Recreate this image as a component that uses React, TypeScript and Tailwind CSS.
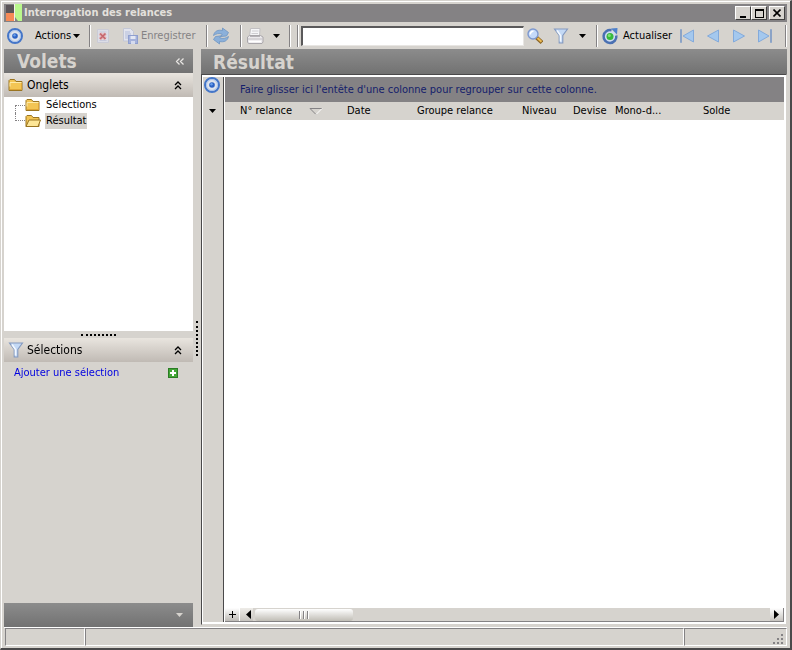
import React, { useState } from 'react';

const TargetIcon = () => (
  <svg className="h-4 w-4" viewBox="0 0 16 16" fill="none">
    <circle cx="8" cy="8" r="7" fill="#dfe4ec" stroke="#4576c8" strokeWidth="2" />
    <circle cx="8" cy="8" r="5.5" stroke="#a9c2ea" strokeWidth="1" />
    <circle cx="8" cy="8" r="2.800" fill="#2c62c4" />
    <circle cx="7.500" cy="7.300" r="1.200" fill="#6ba0ea" />
  </svg>
);

const LogoIcon = () => (
  <svg className="h-[18px] w-4 shrink-0" viewBox="0 0 16 18">
    <rect x="0" y="1" width="8" height="8" fill="#5b5558" />
    <rect x="0" y="9" width="9" height="8" fill="#f58a56" />
    <path d="M9 0h7v17h-4L9 13z" fill="#b9f78c" />
    <rect x="8" y="0" width="1" height="17" fill="#f4efe8" />
  </svg>
);

const DeleteIcon = () => (
  <svg className="h-4 w-4" viewBox="0 0 16 16">
    <path d="M2.500 1.500h11v13h-11z" fill="#dcdde6" stroke="#cacbd6" />
    <path d="M4.500 4h7M4.500 12.500h7" stroke="#c5c9dc" />
    <path d="M5 5.500l5.500 5.500M10.500 5.500L5 11" stroke="#e4b5b8" strokeWidth="3.600" />
    <path d="M5 5.500l5.500 5.500M10.500 5.500L5 11" stroke="#c4666d" strokeWidth="1.600" />
  </svg>
);

const SaveIcon = () => (
  <svg className="h-4 w-4" viewBox="0 0 16 16">
    <path d="M1.500.5h7l3 3V13h-10z" fill="#e2e4ee" stroke="#c3c7d6" />
    <path d="M3 4h5M3 6h6M3 8h5M3 10h3" stroke="#b3bddb" />
    <rect x="6.500" y="7.500" width="9" height="8" fill="#a5b2db" stroke="#8f9fcf" />
    <path d="M8.500 8h5v3h-5z" fill="#e4e8f4" />
    <path d="M9 13h4v3H9z" fill="#d5dbee" />
  </svg>
);

const SyncIcon = () => (
  <svg className="h-[18px] w-[18px]" viewBox="0 0 18 18" fill="#8bb0da" stroke="#6d94c2" strokeWidth=".8">
    <path d="M1.500 8.500C2.500 4 6 2.500 10.500 3.500V1L16.500 5.500 14.500 9 9 9.500 10.200 7.200C7 6 4.500 6.500 1.500 8.500z" />
    <path d="M16.500 9.500C15.500 14 12 15.500 7.500 14.500V17L1.500 12.500 3.500 9.500 9 8.800 7.800 10.800C11 12 13.500 11.500 16.500 9.500z" />
  </svg>
);

const PrinterIcon = () => (
  <svg className="h-[18px] w-[18px]" viewBox="0 0 18 18">
    <path d="M4.500 1.500h9.500l-.5 8h-10z" fill="#f5f5f7" stroke="#c1bfc2" />
    <path d="M6 4h6.500M5.500 6.500h6.500" stroke="#cfced2" />
    <path d="M1.500 10l2-1.500h11l2.500 1.500v5l-1 1.500H2.500L1.500 15z" fill="#ebe9ec" stroke="#a9a6aa" />
    <path d="M2 12h14.500" stroke="#c2bfc3" />
    <path d="M3 14.500h12" stroke="#fff" strokeWidth="1.500" />
    <path d="M4 9.500h10" stroke="#b6b3b8" />
  </svg>
);

const SearchIcon = () => (
  <svg className="h-4 w-4" viewBox="0 0 16 16">
    <path d="M9.500 9.500l5.500 5" stroke="#8a6424" strokeWidth="4" />
    <path d="M10.500 10l4 3.800" stroke="#eebb52" strokeWidth="2" />
    <circle cx="6" cy="6" r="5" fill="#c5dafa" stroke="#7d98cf" strokeWidth="1.400" />
    <path d="M3.300 6.500a3 3 0 0 1 3.200-3.200" fill="none" stroke="#fff" strokeWidth="1.600" />
  </svg>
);

const FunnelIcon = () => (
  <svg className="h-4 w-4" viewBox="0 0 16 16">
    <path d="M1.500 1h13L9.800 7.500V15H6.200V7.500z" fill="#c4d9f5" stroke="#8399bf" strokeWidth="1.100" />
    <path d="M4 2.500l3.500 5V13.500" fill="none" stroke="#f3f8ff" strokeWidth="1.600" />
  </svg>
);

const RefreshIcon = () => (
  <svg className="h-[18px] w-[18px]" viewBox="0 0 18 18" fill="none">
    <circle cx="9" cy="9.500" r="6" fill="#cfdcf0" />
    <path d="M10.500 3.300A6.400 6.400 0 1 0 15.300 8.500" stroke="#4a70b2" strokeWidth="2.500" />
    <path d="M10 1.500l6.500-.5-.5 6.500z" fill="#4d80cc" />
    <circle cx="9" cy="9.500" r="3.500" fill="#37b93c" />
    <circle cx="8.300" cy="8.500" r="1.500" fill="#83e077" />
  </svg>
);

const FolderIcon = ({ open = false }: { open?: boolean }) => (
  <svg className="h-4 w-4 shrink-0" viewBox="0 0 16 16" stroke="#9a7420">
    <path d="M1 13.500v-10l1-1h4.500l1.500 2h6v9z" fill="#f3c554" />
    {open ? (
      <path d="M1 13.500L4 7h11.500l-2.500 6.500z" fill="#fde697" />
    ) : (
      <>
        <path d="M2 9.500v-4h11.500" fill="none" stroke="#fdeaa8" />
        <path d="M2 12.500h11.500V6" fill="none" stroke="#dfa636" />
      </>
    )}
  </svg>
);

const NavIcon = ({ dir, bar = false }: { dir: 'left' | 'right'; bar?: boolean }) => (
  <svg className="h-4 w-4" viewBox="0 0 16 16" fill="#a4c8ee" stroke="#83aadb">
    {dir === 'left' ? (
      <>
        <path d={bar ? 'M14.500 2v12L4 8z' : 'M13.500 2v12L2.500 8z'} />
        {bar && <path d="M1.500 1.500h1v13h-1z" stroke="#8ba3c6" />}
      </>
    ) : (
      <>
        <path d={bar ? 'M1.500 2v12L12 8z' : 'M2.500 2v12L13.500 8z'} />
        {bar && <path d="M13.500 1.500h1v13h-1z" stroke="#8ba3c6" />}
      </>
    )}
  </svg>
);

const Caret = () => (
  <svg className="h-1 w-[7px]" viewBox="0 0 7 4" fill="currentColor">
    <path d="M0 0h7L3.500 4z" />
  </svg>
);

const DoubleChevron = () => (
  <svg className="h-[9px] w-2" viewBox="0 0 8 9" fill="none" stroke="currentColor" strokeWidth="1.300">
    <path d="M1 4l3-3 3 3M1 8l3-3 3 3" />
  </svg>
);

const ScrollArrow = ({ dir }: { dir: 'left' | 'right' }) => (
  <svg className="h-[9px] w-[5px]" viewBox="0 0 5 9">
    <path d={dir === 'left' ? 'M5 0v9L0 4.500z' : 'M0 0v9l5-4.500z'} />
  </svg>
);

const Separator = () => (
  <div className="h-[22px] w-[2px] shrink-0 border-l border-r border-l-[#848284] border-r-white" />
);

const captionButton =
  'flex h-[14px] w-4 items-center justify-center border border-t-white border-l-white border-r-[#404040] border-b-[#404040] bg-[#d6d3ce]';
const panelHeader =
  'flex h-6 items-center bg-linear-to-b from-[#e9e5df] to-[#c0bab4] pr-[11px] pl-1 text-[12px]';
const bar = 'bg-linear-to-b from-[#8c8c8c] to-[#727272]';
const statusCell = 'border border-t-[#848284] border-r-white border-b-white border-l-[#848284]';

const columns = [
  { label: 'N° relance', width: 'w-[107px]' },
  { label: 'Date', width: 'w-[70px]' },
  { label: 'Groupe relance', width: 'w-[105px]' },
  { label: 'Niveau', width: 'w-[51px]' },
  { label: 'Devise', width: 'w-[42px]' },
  { label: 'Mono-d...', width: 'w-[88px]' },
  { label: 'Solde', width: 'w-auto' },
];

const App: React.FC = () => {
  const [search, setSearch] = useState('');

  return (
    <div className="flex min-h-screen flex-col border-t border-r-2 border-b-2 border-l border-t-[#d6d3ce] border-r-[#4a494a] border-b-[#4a494a] border-l-[#d6d3ce] bg-[#d6d3ce] font-['DejaVu_Sans_Condensed','DejaVu_Sans',sans-serif] text-[11px] leading-4 text-black">
      <div className="flex flex-1 flex-col border-t border-l border-white pt-[2px] pr-[3px] pb-[2px] pl-[2px]">
        {/* Title bar */}
        <header className="flex h-[18px] items-center bg-[#848284] pr-[2px] pl-[2px]">
          <LogoIcon />
          <h1 className="flex-1 pl-[2px] font-bold text-[#e3e0dc]">Interrogation des relances</h1>
          <button aria-label="Réduire" className={captionButton}>
            <span className="mt-[7px] h-[2px] w-[6px] bg-black" />
          </button>
          <button aria-label="Agrandir" className={captionButton}>
            <span className="h-[9px] w-[9px] border border-t-2 border-black" />
          </button>
          <button aria-label="Fermer" className={`${captionButton} ml-[2px]`}>
            <svg className="h-2 w-2" viewBox="0 0 8 8" stroke="#000" strokeWidth="1.600">
              <path d="M.5.5l7 7M7.500.5l-7 7" />
            </svg>
          </button>
        </header>

        {/* Toolbar */}
        <div className="flex h-[27px] items-center pt-px pl-[3px]">
          <TargetIcon />
          <button className="ml-3 flex w-[54px] items-center gap-[2px]">
            Actions
            <Caret />
          </button>
          <Separator />
          <button aria-label="Supprimer" disabled className="ml-1">
            <DeleteIcon />
          </button>
          <button disabled className="ml-[11px] flex w-[84px] items-center gap-[3px] text-[#848284]">
            <SaveIcon />
            Enregistrer
          </button>
          <Separator />
          <button aria-label="Synchroniser" className="mx-1">
            <SyncIcon />
          </button>
          <div className="w-[6px]" />
          <Separator />
          <button aria-label="Imprimer" className="ml-1 flex w-[43px] items-center gap-[9px]">
            <PrinterIcon />
            <Caret />
          </button>
          <Separator />
          <div className="w-[6px]" />
          <Separator />
          <input
            aria-label="Rechercher"
            autoFocus
            value={search}
            onChange={(e) => setSearch(e.target.value)}
            className="ml-[2px] h-5 min-w-0 flex-1 border border-t-2 border-l-2 border-t-[#5a595a] border-r-[#e8e6e3] border-b-[#e8e6e3] border-l-[#5a595a] bg-white px-px outline-none"
          />
          <button aria-label="Lancer la recherche" className="ml-[3px]">
            <SearchIcon />
          </button>
          <button aria-label="Filtrer" className="ml-[10px] flex w-[43px] items-center gap-[10px]">
            <FunnelIcon />
            <Caret />
          </button>
          <Separator />
          <button className="ml-[3px] flex w-[72px] items-center gap-1">
            <RefreshIcon />
            Actualiser
          </button>
          <div className="ml-[6px] flex items-center gap-[10px]">
            <button aria-label="Premier"><NavIcon dir="left" bar /></button>
            <button aria-label="Précédent"><NavIcon dir="left" /></button>
            <button aria-label="Suivant"><NavIcon dir="right" /></button>
            <button aria-label="Dernier"><NavIcon dir="right" bar /></button>
          </div>
          <div className="w-3" />
          <Separator />
        </div>

        <div className="flex flex-1">
          {/* Sidebar */}
          <aside className="flex w-[189px] shrink-0 flex-col">
            <div className={`${bar} flex h-6 items-center justify-between pr-[9px] pl-[13px] text-[#d6d3ce]`}>
              <h2 className="text-[19px] font-bold">Volets</h2>
              <button aria-label="Replier les volets" className="-rotate-90 text-[#e8e6e3]">
                <DoubleChevron />
              </button>
            </div>
            <div className={panelHeader}>
              <FolderIcon />
              <h3 className="flex-1 pl-[3px]">Onglets</h3>
              <button aria-label="Replier les onglets"><DoubleChevron /></button>
            </div>
            <ul className="h-[234px] bg-white pl-[11px]">
              <li className="flex h-4 items-center">
                <span className="mt-2 h-2 w-[10px] border-t border-l border-dotted border-[#848284]" />
                <FolderIcon />
                <span className="ml-1 px-px">Sélections</span>
              </li>
              <li className="flex h-4 items-center">
                <span className="mb-2 h-2 w-[10px] border-b border-l border-dotted border-[#848284]" />
                <FolderIcon open />
                <span className="ml-1 bg-[#d6d3ce] px-px">Résultat</span>
              </li>
            </ul>
            <div className="flex h-[7px] items-center justify-center">
              <div className="w-[35px] border-t-2 border-dotted border-black" />
            </div>
            <div className={panelHeader}>
              <FunnelIcon />
              <h3 className="flex-1 pl-[3px]">Sélections</h3>
              <button aria-label="Replier les sélections"><DoubleChevron /></button>
            </div>
            <div className="flex items-center justify-between pt-[3px] pr-[15px] pl-[10px]">
              <a href="#selection" className="text-[#0000e0]">Ajouter une sélection</a>
              <svg className="h-[10px] w-[10px]" viewBox="0 0 10 10">
                <rect x=".5" y=".5" width="9" height="9" fill="#42a535" stroke="#2b7c24" />
                <path d="M5 2v6M2 5h6" stroke="#fff" strokeWidth="2" />
              </svg>
            </div>
            <div className={`${bar} mt-auto flex h-6 items-center justify-end pr-[10px] text-[#d6d3ce]`}>
              <button aria-label="Plus de volets"><Caret /></button>
            </div>
          </aside>

          {/* Splitter */}
          <div className="flex w-2 shrink-0 items-center justify-center">
            <div className="h-[35px] border-l-2 border-dotted border-black" />
          </div>

          {/* Result panel */}
          <main className="flex min-w-0 flex-1 flex-col pb-[2px]">
            <div className={`${bar} flex h-[25px] items-center pl-3 text-[#d6d3ce]`}>
              <h2 className="text-[19px] font-bold">Résultat</h2>
            </div>
            <div className="flex flex-1 border border-t-[#4a494a] border-r-[#d6d3ce] border-b-[#d6d3ce] border-l-[#4a494a] bg-white pt-[2px] pr-[2px] pb-[2px] pl-px">
              <div className="flex w-[21px] shrink-0 flex-col items-center border-r border-[#4a494a] bg-[#d6d3ce] pr-[2px]">
                <TargetIcon />
                <button aria-label="Options de colonnes" className="mt-4">
                  <Caret />
                </button>
              </div>
              <div className="flex min-w-0 flex-1 flex-col pl-px">
                <p className="h-[25px] bg-[#848284] pt-[5px] pl-[15px] text-[#14206b]">
                  Faire glisser ici l'entête d'une colonne pour regrouper sur cette colonne.
                </p>
                <div className="bg-[#d6d3ce] pl-[15px]">
                  <table className="w-full table-fixed text-left">
                    <thead>
                      <tr className="h-[18px]">
                        {columns.map((col, i) => (
                          <th key={col.label} className={`${col.width} p-0 font-normal whitespace-nowrap`}>
                            {i === 0 ? (
                              <span className="flex items-center justify-between pr-6">
                                {col.label}
                                <svg className="h-[7px] w-[14px]" viewBox="0 0 14 7" fill="none">
                                  <path d="M7 6.500L1 .5h12" stroke="#848284" />
                                  <path d="M13 .5L7 6.500" stroke="#fff" />
                                </svg>
                              </span>
                            ) : (
                              col.label
                            )}
                          </th>
                        ))}
                      </tr>
                    </thead>
                  </table>
                </div>
                {/* Horizontal scrollbar */}
                <div className="mt-auto flex h-[14px] items-center border-b border-[#848284] bg-[#d6d3ce]">
                  <button aria-label="Ajouter" className="flex h-[13px] w-[14px] items-center justify-center bg-linear-to-b from-white to-[#bdbab5]">
                    <svg className="h-[7px] w-[7px]" viewBox="0 0 7 7" stroke="#000">
                      <path d="M3.500 0v7M0 3.500h7" />
                    </svg>
                  </button>
                  <button aria-label="Défiler à gauche" className="flex h-[13px] w-[14px] items-center justify-end border-l border-white bg-linear-to-b from-[#eeece8] to-[#c6c3be] pr-[2px]">
                    <ScrollArrow dir="left" />
                  </button>
                  <div className="ml-[2px] flex h-3 w-[98px] items-center justify-center gap-[2px] rounded-[3px] bg-linear-to-b from-white to-[#c0bdb5]">
                    <span className="h-2 w-[2px] border-l border-r border-l-[#848284] border-r-white" />
                    <span className="h-2 w-[2px] border-l border-r border-l-[#848284] border-r-white" />
                    <span className="h-2 w-[2px] border-l border-r border-l-[#848284] border-r-white" />
                  </div>
                  <button aria-label="Défiler à droite" className="ml-auto flex h-[13px] w-[14px] items-center justify-center border-r border-[#848284] bg-linear-to-b from-white to-[#c6c3be]">
                    <ScrollArrow dir="right" />
                  </button>
                </div>
              </div>
            </div>
          </main>
        </div>

        {/* Status bar */}
        <footer className="flex h-[19px] border-t border-white pl-px">
          <div className={`${statusCell} w-20`} />
          <div className={`${statusCell} flex-1`} />
          <div className={`${statusCell} flex w-[103px] items-end justify-end pr-[2px] pb-px`}>
            <svg className="h-[10px] w-[11px]" viewBox="0 0 11 10" fill="#848284">
              <path d="M8 0h2v2H8zM4 4h2v2H4zM8 4h2v2H8zM0 8h2v2H0zM4 8h2v2H4zM8 8h2v2H8z" />
            </svg>
          </div>
        </footer>
      </div>
    </div>
  );
};

export default App;
